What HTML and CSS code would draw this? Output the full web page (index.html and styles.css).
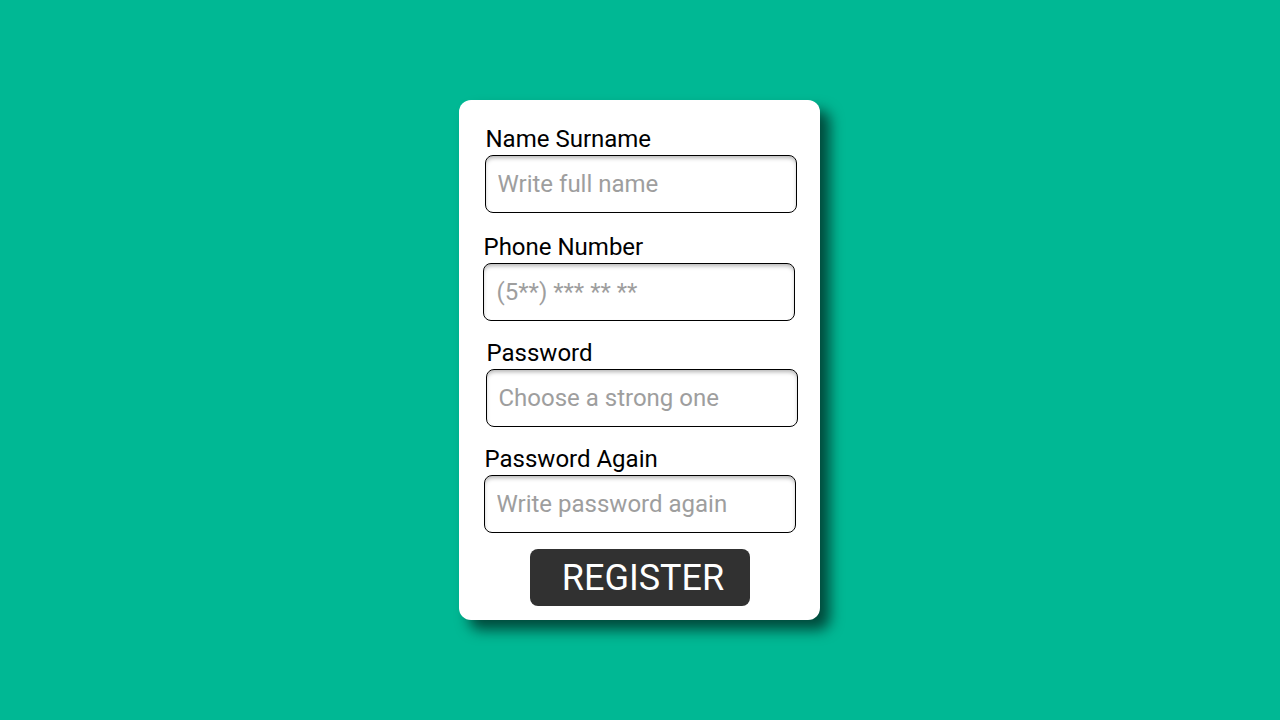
FILE: index.html
```html
<!DOCTYPE html>
<html lang="en">
<head>
<meta charset="utf-8">
<title>Register</title>
<link rel="stylesheet" href="styles.css">
</head>
<body>
<main class="page">
  <form class="card">
    <div class="field field-name">
      <label class="label" for="name">Name Surname</label>
      <input class="input" id="name" type="text" placeholder="Write full name">
    </div>
    <div class="field field-phone">
      <label class="label" for="phone">Phone Number</label>
      <input class="input" id="phone" type="text" placeholder="(5**) *** ** **">
    </div>
    <div class="field field-pass">
      <label class="label" for="pass">Password</label>
      <input class="input" id="pass" type="password" placeholder="Choose a strong one">
    </div>
    <div class="field field-again">
      <label class="label" for="again">Password Again</label>
      <input class="input" id="again" type="password" placeholder="Write password again">
    </div>
    <button class="button" type="button">REGISTER</button>
  </form>
</main>
</body>
</html>
```
FILE: styles.css
```css
* { box-sizing: border-box; }
html, body { margin: 0; padding: 0; }
body {
  background: #00b894;
  font-family: Roboto, "Noto Sans", sans-serif;
  width: 1280px;
  height: 720px;
  overflow: hidden;
}
.page {
  display: flex;
  justify-content: center;
  padding-top: 100px;
  padding-right: 2px;
}
.card {
  width: 361px;
  height: 520px;
  background: #ffffff;
  border-radius: 12px;
  box-shadow: 10px 10px 14px rgba(0, 0, 0, 0.6);
  padding: 25px 23px 14px 26px;
  display: flex;
  flex-direction: column;
}
.field {
  display: flex;
  flex-direction: column;
}
.label {
  font-size: 24px;
  line-height: 28px;
  color: #000;
  margin-bottom: 2px;
  margin-left: 1px;
}
.input {
  width: 312px;
  height: 58px;
  border: 1px solid #000;
  border-radius: 8px;
  box-shadow: inset 0 3px 4px -1px rgba(0, 0, 0, 0.3);
  padding: 0 12px;
  font-family: Roboto, "Noto Sans", sans-serif;
  font-size: 24px;
  color: #333;
  background: #fff;
  outline: none;
}
.input::placeholder { color: #9e9e9e; }
.field-phone { margin-top: 20px; margin-left: -2px; }
.field-phone .input { padding-left: 13px; }
.field-pass { margin-top: 18px; margin-left: 1px; }
.field-again { margin-top: 18px; margin-left: -1px; }
.button {
  align-self: center;
  margin-top: 16px;
  width: 220px;
  height: 57px;
  border: none;
  border-radius: 8px;
  background: #313131;
  color: #fff;
  font-family: Roboto, "Noto Sans", sans-serif;
  font-size: 36px;
  padding: 0 0 0 7px;
  margin-left: -2px;
}
```
